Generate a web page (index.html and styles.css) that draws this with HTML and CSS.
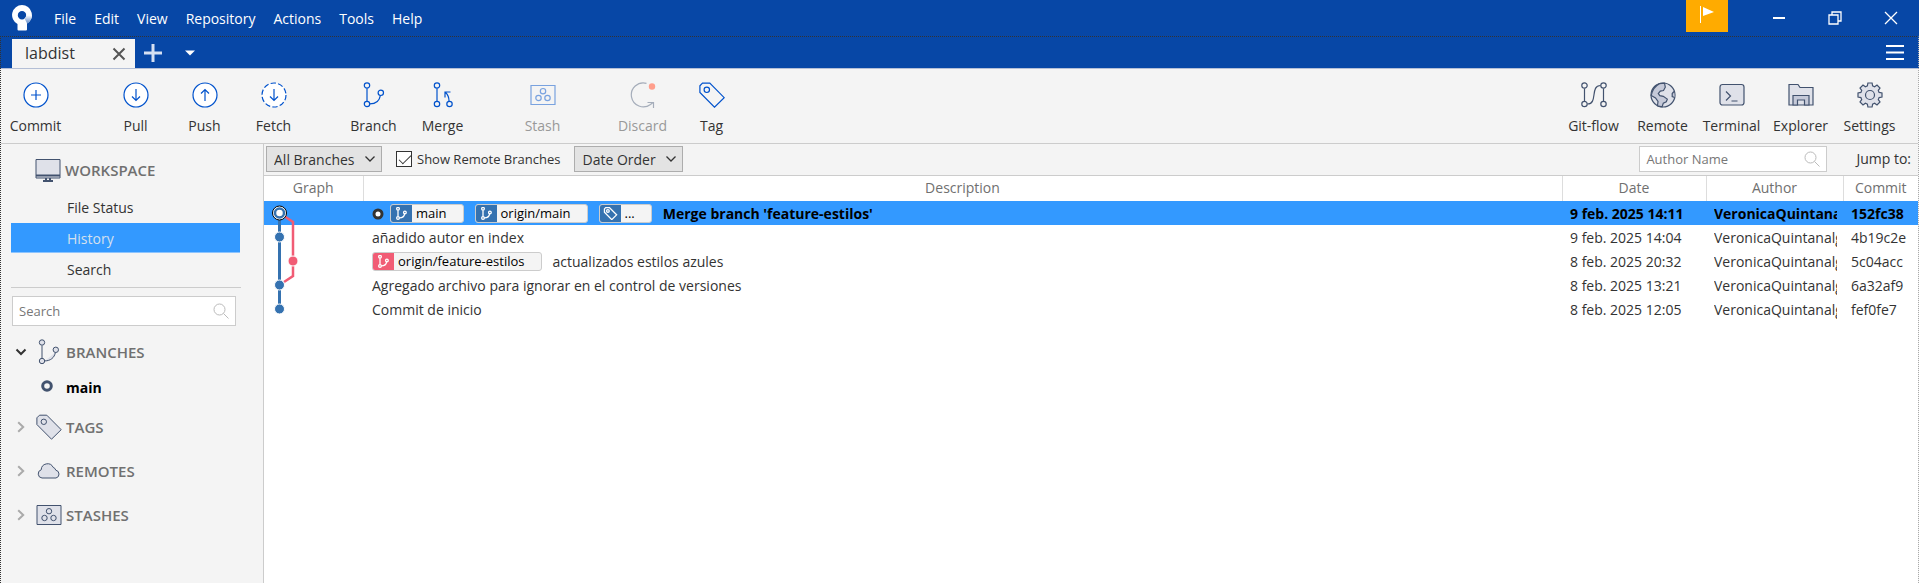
FILE: index.html
```html
<!DOCTYPE html>
<html lang="en">
<head>
<meta charset="utf-8">
<title>labdist</title>
<link rel="stylesheet" href="styles.css">
</head>
<body>
<svg class="sprite" aria-hidden="true">
  <defs>
    <linearGradient id="logo-shade" x1="0" y1="0" x2="0" y2="1">
      <stop offset="0" stop-color="#fff"/>
      <stop offset="1" stop-color="#5d87c6"/>
    </linearGradient>
  </defs>
  <symbol id="i-branch" viewBox="0 0 26 26"><path d="M6 6.500v12.500M8.800 21.900c5.500 0 9.700-3 10.600-8.600"/><circle cx="6" cy="3.500" r="2.700"/><circle cx="6" cy="22" r="2.700"/><circle cx="19.800" cy="10.800" r="2.700"/></symbol>
  <symbol id="i-merge" viewBox="0 0 26 26"><path d="M7 6.500v12.500M19 19c0-4-.7-6-3.500-8.500M15 15.500V10h5.500"/><circle cx="7" cy="3.500" r="2.700"/><circle cx="7" cy="22" r="2.700"/><circle cx="19.500" cy="22" r="2.700"/></symbol>
  <symbol id="i-tag" viewBox="0 0 26 26"><path class="body" d="M3.500 1.200h7.300L25.200 15.700l-9.700 9.500L.9 10.500V3.800z"/><circle cx="7.800" cy="7.800" r="2.700"/></symbol>
  <symbol id="i-stash" viewBox="0 0 26 26"><path class="body" d="M1 3.500h24v19H1z"/><circle cx="13" cy="9.200" r="2.700"/><circle cx="8.500" cy="16" r="2.700"/><circle cx="17.500" cy="16" r="2.700"/></symbol>
  <symbol id="i-search" viewBox="0 0 16 16"><circle cx="6.500" cy="6.500" r="5.500"/><path d="M10.500 10.500l5 5"/></symbol>
  <symbol id="i-down" viewBox="0 0 12 8"><path d="M1.500 1.500L6 6l4.500-4.500"/></symbol>
  <symbol id="i-right" viewBox="0 0 8 12"><path d="M1.200 1.200L6.200 6l-5 4.800"/></symbol>
</svg>

<header class="titlebar">
  <svg class="logo" viewBox="0 0 20 26" aria-label="Sourcetree" role="img">
    <path fill="#fff" fill-rule="evenodd" d="M10 0a10 10 0 0 1 5 18.600V24.500a1 1 0 0 1-1 1H6.500a1 1 0 0 1-1-1v-5.600A10 10 0 0 1 10 0zM10 6a4.200 4.200 0 1 0 0 8.400A4.200 4.200 0 0 0 10 6z"/>
    <path fill="url(#logo-shade)" d="M14.200 10.200H20a10 10 0 0 1-5 8.400c-.5-1.500-1.300-3-2.600-5a4.200 4.200 0 0 0 1.800-3.400z"/>
  </svg>
  <nav class="menu">
    <button>File</button><button>Edit</button><button>View</button><button>Repository</button><button>Actions</button><button>Tools</button><button>Help</button>
  </nav>
  <button class="flag" aria-label="Notifications"><svg width="16" height="18" viewBox="0 0 16 18"><path d="M1.500 0v17" stroke="#fff"/><path d="M4 1l11 5-11 4z" fill="#fff"/></svg></button>
  <div class="window-buttons">
    <button aria-label="Minimize"><svg width="14" height="14" viewBox="0 0 14 14"><path d="M1 7h12" stroke-width="2"/></svg></button>
    <button aria-label="Restore"><svg width="14" height="14" viewBox="0 0 14 14"><path d="M1 4h9v9H1zM4 4V1h9v9h-3"/></svg></button>
    <button aria-label="Close"><svg width="14" height="14" viewBox="0 0 14 14"><path d="M1 1l12 12M13 1L1 13"/></svg></button>
  </div>
</header>

<div class="frame">
  <div class="tabbar">
    <div class="tab"><span>labdist</span><button aria-label="Close tab"><svg width="14" height="14" viewBox="0 0 14 14"><path d="M1.500 1.500l11 11M12.500 1.500l-11 11"/></svg></button></div>
    <button class="add" aria-label="New tab"><svg width="18" height="18" viewBox="0 0 18 18"><path d="M0 9h18M9 0v18"/></svg></button>
    <button class="tab-list" aria-label="Tab list"><svg width="10" height="6" viewBox="0 0 10 6"><path d="M0 .5h10L5 5.500z"/></svg></button>
    <button class="burger" aria-label="Menu"><svg width="18" height="15" viewBox="0 0 18 15"><path d="M0 1h18M0 7.500h18M0 14h18"/></svg></button>
  </div>

  <div class="toolbar">
    <div class="group"><button class="tool"><svg viewBox="0 0 26 26"><circle class="body" cx="13" cy="13" r="12"/><path d="M13 8v10M8 13h10"/></svg>Commit</button></div>
    <div class="group">
      <button class="tool"><svg viewBox="0 0 26 26"><circle class="body" cx="13" cy="13" r="12"/><path d="M13 7v11M9 14.500l4 4 4-4"/></svg>Pull</button>
      <button class="tool"><svg viewBox="0 0 26 26"><circle class="body" cx="13" cy="13" r="12"/><path d="M13 19V8M9 11.500l4-4 4 4"/></svg>Push</button>
      <button class="tool"><svg viewBox="0 0 26 26"><circle class="body" cx="13" cy="13" r="12" stroke-dasharray="5.300 2.240"/><path d="M13 7v11M9 14.500l4 4 4-4"/></svg>Fetch</button>
    </div>
    <div class="group">
      <button class="tool"><svg><use href="#i-branch"/></svg>Branch</button>
      <button class="tool"><svg><use href="#i-merge"/></svg>Merge</button>
    </div>
    <div class="group"><button class="tool" disabled><svg class="faded"><use href="#i-stash"/></svg>Stash</button></div>
    <div class="group">
      <button class="tool" disabled><svg class="muted" viewBox="0 0 26 26"><path d="M16.500 1.300A12 12 0 1 0 20.500 22.500L23 20.500M17.500 20.500h6V26"/><circle cx="22" cy="4.500" r="3.200" fill="#ff9e8c" stroke="none"/></svg>Discard</button>
      <button class="tool"><svg><use href="#i-tag"/></svg>Tag</button>
    </div>
    <div class="group end">
      <button class="tool"><svg viewBox="0 0 26 26"><path d="M3.500 6.500V19M22.500 6.500V19M6.500 22C17 22 9 3.500 19.500 3.500"/><circle cx="3.500" cy="3.500" r="2.700"/><circle cx="3.500" cy="22" r="2.700"/><circle cx="22.500" cy="3.500" r="2.700"/><circle cx="22.500" cy="22" r="2.700"/></svg>Git-flow</button>
      <button class="tool"><svg viewBox="0 0 26 26"><circle class="body" cx="13" cy="13" r="12"/><path class="land" d="M14.500 1.200l.8 4-1.800 3.300-3.200.6-2 2.400 1.500 2.200 3.500.6 4 2.800-1 2.600-3 1.400-1.200 3.700-4.600-1 .5-4.300-2.500-3.500-4.300-2.500C2 9 5 4 9.500 1.600zM24 9.500l-1.800 2v3l2.400 1"/></svg>Remote</button>
      <button class="tool"><svg viewBox="0 0 26 26"><rect class="body" x="1" y="2.500" width="24" height="20.500" rx="2.500"/><path d="M7 9.500l4.500 4.500L7 18.500M12.500 19h6"/></svg>Terminal</button>
      <button class="tool"><svg viewBox="0 0 26 26"><path class="body" d="M1 23V2.500h9l2 3h13V23z"/><path class="land" d="M5 23v-9.500h16V23h-4.500v-5h-7v5z"/></svg>Explorer</button>
      <button class="tool"><svg viewBox="-13 -13 26 26"><path class="body" d="M9.100-2.600L12-2.100V2.100L9.100 2.600 8.300 4.600 10 7 7 10 4.600 8.300 2.600 9.100 2.100 12H-2.100L-2.600 9.100-4.600 8.300-7 10-10 7-8.300 4.600-9.100 2.600-12 2.100V-2.100L-9.100-2.600-8.300-4.600-10-7-7-10-4.600-8.300-2.600-9.100-2.100-12H2.100L2.600-9.100 4.600-8.300 7-10 10-7 8.300-4.600z"/><circle r="4.500"/></svg>Settings</button>
    </div>
  </div>

  <div class="main">
    <aside class="sidebar">
      <section>
        <h2 class="head workspace"><svg viewBox="0 0 26 26"><path class="body" d="M1 2.500h24V21H1z"/><path d="M1 18.500h24" stroke-width="2"/><path d="M11 21v2.500M15 21v2.500M8 24h10" stroke-width="2"/></svg>WORKSPACE</h2>
        <a class="item" href="#">File Status</a>
        <a class="item selected" href="#">History</a>
        <a class="item" href="#">Search</a>
      </section>
      <div class="find field"><input type="text" placeholder="Search" aria-label="Search"><svg><use href="#i-search"/></svg></div>
      <h2 class="head branches"><svg class="arrow open"><use href="#i-down"/></svg><svg><use href="#i-branch"/></svg>BRANCHES</h2>
      <a class="branch" href="#"><svg viewBox="0 0 12 12"><circle cx="6" cy="6" r="4.300"/></svg>main</a>
      <h2 class="head"><svg class="arrow"><use href="#i-right"/></svg><svg><use href="#i-tag"/></svg>TAGS</h2>
      <h2 class="head"><svg class="arrow"><use href="#i-right"/></svg><svg viewBox="0 0 26 26"><path class="body" d="M6 20a4.200 4.200 0 0 1-.8-8.200 6.300 6.300 0 0 1 12-2.400 4 4 0 0 1 2.600 2.800A4 4 0 0 1 20 20z"/></svg>REMOTES</h2>
      <h2 class="head"><svg class="arrow"><use href="#i-right"/></svg><svg><use href="#i-stash"/></svg>STASHES</h2>
    </aside>

    <main class="history">
      <div class="filters">
        <div class="pick wide"><select aria-label="Branch filter"><option>All Branches</option></select><svg><use href="#i-down"/></svg></div>
        <label class="check"><input type="checkbox" checked>Show Remote Branches</label>
        <div class="pick"><select aria-label="Order"><option>Date Order</option></select><svg><use href="#i-down"/></svg></div>
        <div class="author field"><input type="text" placeholder="Author Name" aria-label="Author Name"><svg><use href="#i-search"/></svg></div>
        <span class="jump">Jump to:</span>
      </div>
      <table>
        <colgroup><col class="c-graph"><col><col class="c-date"><col class="c-author"><col class="c-commit"></colgroup>
        <thead><tr><th>Graph</th><th>Description</th><th>Date</th><th>Author</th><th>Commit</th></tr></thead>
        <tbody>
          <tr class="current">
            <td class="graph"><svg viewBox="0 0 99 24"><path class="blue" d="M15.500 18v6"/><path class="pink" d="M20 15l9 6v3"/><circle cx="15.500" cy="12" r="7" fill="#fff"/><circle cx="15.500" cy="12" r="4.500" fill="#fff" stroke="#3572b0" stroke-width="2.500"/></svg></td>
            <td><div class="desc"><svg class="head-mark" viewBox="0 0 12 12"><circle cx="6" cy="6" r="4"/></svg><span class="ref"><svg><use href="#i-branch"/></svg>main</span><span class="ref"><svg><use href="#i-branch"/></svg>origin/main</span><span class="ref"><svg><use href="#i-tag"/></svg>...</span><span>Merge branch 'feature-estilos'</span></div></td>
            <td>9 feb. 2025 14:11</td><td><div class="clip">VeronicaQuintanalg</div></td><td>152fc38</td>
          </tr>
          <tr>
            <td class="graph"><svg viewBox="0 0 99 24"><path class="blue" d="M15.500 0v24"/><path class="pink" d="M29 0v24"/><circle cx="15.500" cy="12" r="5" class="node"/></svg></td>
            <td>añadido autor en index</td><td>9 feb. 2025 14:04</td><td><div class="clip">VeronicaQuintanalg</div></td><td>4b19c2e</td>
          </tr>
          <tr>
            <td class="graph"><svg viewBox="0 0 99 24"><path class="blue" d="M15.500 0v24"/><path class="pink" d="M29 0v24"/><circle cx="29" cy="12" r="5" class="node rose"/></svg></td>
            <td><div class="desc"><span class="ref rose"><svg><use href="#i-branch"/></svg>origin/feature-estilos</span><span>actualizados estilos azules</span></div></td><td>8 feb. 2025 20:32</td><td><div class="clip">VeronicaQuintanalg</div></td><td>5c04acc</td>
          </tr>
          <tr>
            <td class="graph"><svg viewBox="0 0 99 24"><path class="blue" d="M15.500 0v24"/><path class="pink" d="M29 0v3l-9 6"/><circle cx="15.500" cy="12" r="5" class="node"/></svg></td>
            <td>Agregado archivo para ignorar en el control de versiones</td><td>8 feb. 2025 13:21</td><td><div class="clip">VeronicaQuintanalg</div></td><td>6a32af9</td>
          </tr>
          <tr>
            <td class="graph"><svg viewBox="0 0 99 24"><path class="blue" d="M15.500 0v12"/><circle cx="15.500" cy="12" r="5" class="node"/></svg></td>
            <td>Commit de inicio</td><td>8 feb. 2025 12:05</td><td><div class="clip">VeronicaQuintanalg</div></td><td>fef0fe7</td>
          </tr>
        </tbody>
      </table>
    </main>
  </div>
</div>
</body>
</html>
```

FILE: styles.css
```css
* { box-sizing: border-box; }

body {
  margin: 0;
  min-height: 100vh;
  display: flex;
  flex-direction: column;
  background: #f4f4f4;
  color: #333;
  font: 14px/20px "Open Sans", "Noto Sans", sans-serif;
}

button {
  border: 0;
  padding: 0;
  background: none;
  color: inherit;
  font: inherit;
}

a { color: inherit; text-decoration: none; }

svg {
  display: block;
  flex: none;
  fill: none;
  stroke: currentColor;
}

.sprite { position: absolute; width: 0; height: 0; }

/* Title bar */
.titlebar {
  display: flex;
  height: 36px;
  background: #0747a6;
  color: #fff;
}

.logo { width: 20px; height: 26px; margin: 5px 22px 0 12px; stroke: none; }
.menu { display: flex; gap: 18px; padding-top: 1px; }

.flag {
  display: flex;
  justify-content: center;
  width: 42px;
  height: 32px;
  margin-left: auto;
  padding-top: 6px;
  background: #ffab00;
}

.flag svg { stroke: none; }
.window-buttons { display: flex; margin-left: 23px; }
.window-buttons button { display: grid; place-items: center; width: 56px; }
.window-buttons svg { stroke-width: 1.3; }

/* Tabs */
.frame {
  flex: 1;
  display: flex;
  flex-direction: column;
  border: 1px dotted #333;
  border-right-color: #aaa;
  border-bottom: 0;
  background: linear-gradient(#0747a6 32px, #f4f4f4 32px) border-box;
}

.tabbar {
  display: flex;
  align-items: center;
  height: 32px;
  padding: 0 14px 0 11px;
  border-bottom: 1px solid #b4bfd6;
  background: #0747a6;
  color: #fff;
}

.tab {
  align-self: flex-end;
  display: flex;
  align-items: center;
  justify-content: space-between;
  width: 123px;
  height: 29px;
  padding: 0 9px 2px 13px;
  background: #f4f4f4;
  color: #333;
  font-size: 16px;
}

.tab svg { stroke: #555; stroke-width: 2; margin-top: 2px; }
.add { margin: 0 23px 0 9px; color: #d5e0f2; }
.add svg { stroke-width: 3; }
.tab-list svg { fill: #fff; stroke: none; }
.burger { margin-left: auto; }
.burger svg { stroke-width: 2; }

/* Toolbar */
.toolbar {
  display: flex;
  gap: 31px;
  padding: 13px 14px 7px 0;
  border-bottom: 1px solid #ccc;
}

.group { display: flex; }
.end { margin-left: auto; }

.tool {
  display: flex;
  flex-direction: column;
  align-items: center;
  gap: 8px;
  width: 69px;
}

.tool svg { width: 26px; height: 26px; color: #0052cc; stroke-width: 1.2; }
.tool .body { fill: #fff; }
.tool:disabled { color: #999; }
.tool .faded { opacity: .5; }
.tool .muted { color: #a5adba; }
.end svg { color: #42526e; }
.end .body, .head .body { fill: #dfe1e9; }
.end .land { fill: #c5c9d8; }

/* Sidebar */
.main { flex: 1; display: flex; }

.sidebar {
  width: 263px;
  padding: 11px 22px 0 10px;
  border-right: 1px solid #ccc;
}

.sidebar section { padding-bottom: 2px; border-bottom: 1px solid #ccc; }

.head {
  display: flex;
  align-items: center;
  gap: 4px;
  height: 30px;
  margin: 0 0 14px;
  color: #707070;
  font-size: 15px;
  font-weight: 600;
}

.head svg { width: 26px; height: 26px; color: #42526e; fill: #dfe1e9; }
.head .arrow { width: 12px; height: 12px; margin: 0 5px 0 4px; fill: none; color: #aaa; stroke-width: 2; }
.head .open { color: #333; }
.workspace { margin: 0 0 7px 24px; }
.branches { margin: 11px 0 5px; }

.item {
  display: block;
  height: 30px;
  margin: 0 1px 1px 0;
  padding: 6px 0 0 56px;
}

.selected { background: #3399ff; color: #d5e0ee; border-bottom: 1px solid #8cc4ff; }

.field {
  display: flex;
  align-items: center;
  border: 1px solid #ccc;
  background: #fff;
}

.field input {
  flex: 1;
  min-width: 0;
  border: 0;
  padding: 0 6px;
  background: none;
  font: 13px/20px "Open Sans", "Noto Sans", sans-serif;
}

.field input::placeholder { color: #777; }
.field svg { width: 16px; height: 16px; margin-right: 6px; color: #bbb; }
.find { height: 30px; margin: 8px 5px 0 1px; }

.branch {
  display: flex;
  align-items: center;
  gap: 13px;
  height: 32px;
  margin-bottom: 8px;
  padding-left: 30px;
  color: #000;
  font-weight: 700;
}

.branch svg { width: 12px; height: 12px; margin-bottom: 4px; color: #42526e; stroke-width: 3; }

/* Filter bar */
.history { flex: 1; min-width: 0; background: #fff; }

.filters {
  display: flex;
  align-items: center;
  height: 32px;
  padding: 0 7px 1px 2px;
  border-bottom: 1px solid #ccc;
  background: #f4f4f4;
}

.pick { position: relative; width: 109px; height: 26px; }
.wide { width: 116px; }

.pick select {
  appearance: none;
  width: 100%;
  height: 100%;
  border: 1px solid #adadad;
  border-radius: 0;
  padding: 2px 0 0 7px;
  background: #e3e3e3;
  color: #333;
  font: inherit;
}

.pick svg { position: absolute; top: 9px; right: 6px; width: 12px; height: 8px; stroke-width: 1.3; pointer-events: none; }

.check { display: flex; align-items: center; gap: 5px; margin: 0 14px; font-size: 13px; }

.check input {
  appearance: none;
  position: relative;
  width: 16px;
  height: 16px;
  margin: 0;
  border: 1px solid #333;
  background: #fff;
}

.check input:checked::after {
  content: "";
  position: absolute;
  top: 0;
  left: 5px;
  width: 5px;
  height: 11px;
  border: solid #333;
  border-width: 0 1px 1px 0;
  transform: rotate(45deg);
}

.author { width: 188px; height: 26px; margin: 0 29px 0 auto; }

/* Commit table */
table { width: 100%; table-layout: fixed; border-collapse: collapse; }
.c-graph { width: 99px; }
.c-date { width: 144px; }
.c-author { width: 137px; }
.c-commit { width: 75px; }

th {
  height: 25px;
  padding: 0 0 2px;
  border-right: 1px solid #ddd;
  color: #707070;
  font-weight: 400;
}

th:last-child { border-right: 0; }
td { height: 24px; padding: 1px 0 0 8px; line-height: 22px; white-space: nowrap; }
td:nth-child(2) { padding-left: 9px; }
td.graph { padding: 0; }
.graph svg { width: 99px; height: 24px; }
.blue { stroke: #3572b0; stroke-width: 3; }
.pink { stroke: #f15c75; stroke-width: 2.5; }
.node { fill: #3572b0; stroke: #fff; }
.node.rose { fill: #f15c75; }
.current { background: #3399ff; color: #000; font-weight: 700; }
.clip { overflow: hidden; margin-right: 6px; }
.desc { display: flex; align-items: center; gap: 11px; height: 22px; }
.head-mark { width: 12px; height: 12px; margin-right: -5px; fill: #fff; color: #333; stroke-width: 3; }

.ref {
  display: flex;
  align-items: center;
  gap: 4px;
  height: 19px;
  padding-right: 16px;
  border: 1px solid #ccc;
  border-radius: 3px;
  background: #f4f4f4;
  color: #000;
  font-size: 13px;
  font-weight: 400;
  line-height: 17px;
}

.ref svg {
  width: 21px;
  height: 17px;
  padding: 2px 3px;
  border-radius: 2px 0 0 2px;
  background: #3572b0;
  color: #fff;
  stroke-width: 2.6;
}

.ref.rose svg { background: #f15c75; }
```
